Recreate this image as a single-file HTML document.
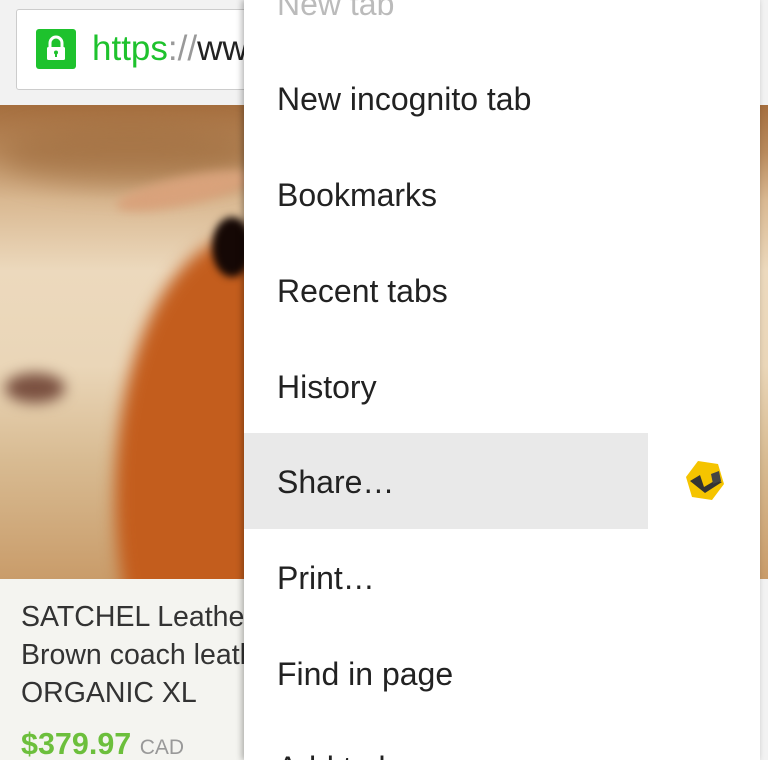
<html style="height:760px;overflow:hidden"><head><style>
body{margin:0;width:768px;height:760px;overflow:hidden;position:relative;background:#f2f2f2;font-family:"Liberation Sans",sans-serif}
.img{position:absolute;left:0;top:105px;width:768px;height:474px;overflow:hidden;background:linear-gradient(180deg,#a56e3e 0%,#b98a5c 10%,#d9b891 20%,#ecd9bd 35%,#ead6b8 55%,#d8bb92 75%,#c99c6a 100%)}
.blob{position:absolute;border-radius:50%}
.bar{position:absolute;left:16px;top:9px;width:300px;height:79px;background:#fff;border:1px solid #ccc;border-radius:3px}
.lock{position:absolute;left:36px;top:29px;width:40px;height:40px;background:#1ec22d;border-radius:3px}
.url{position:absolute;left:92px;top:29px;font-size:35px;color:#1ec22d}
.card{position:absolute;left:0;top:579px;width:260px;height:181px;background:#f4f4f0}
.t{position:absolute;left:21px;font-size:28.5px;color:#333;line-height:38px;top:598px;white-space:nowrap}
.price{position:absolute;left:21px;top:727px;font-size:30.5px;font-weight:bold;color:#6cbf3c}
.menu{position:absolute;left:244px;top:0;width:516px;height:760px;background:#fff;box-shadow:-2px 0 6px rgba(0,0,0,.3)}
.it{position:absolute;left:33px;font-size:32px;color:#222;white-space:nowrap}
.hl{position:absolute;left:0;top:433px;width:404px;height:96px;background:#e9e9e9}
</style></head><body>
<div class="img">
<div class="blob" style="left:0;top:20px;width:260px;height:60px;background:#9c6a3c;filter:blur(14px);opacity:.6"></div>
<div class="blob" style="left:115px;top:130px;width:260px;height:520px;background:#c35d1d;filter:blur(8px)"></div>
<div class="blob" style="left:115px;top:72px;width:140px;height:28px;background:#d9a27b;filter:blur(5px);transform:rotate(-12deg)"></div>
<div class="blob" style="left:212px;top:112px;width:40px;height:60px;background:#150805;filter:blur(4px)"></div>
<div class="blob" style="left:5px;top:268px;width:60px;height:30px;background:#7a5040;filter:blur(7px)"></div>
</div>
<div class="bar"></div>
<div class="lock"><svg width="40" height="40"><rect x="11" y="18" width="18" height="13" rx="1.5" fill="#fff"/><path d="M14 18v-4a6 6 0 0 1 12 0v4" stroke="#fff" stroke-width="3" fill="none"/><circle cx="20" cy="23.5" r="2" fill="#1ec22d"/><rect x="19" y="24" width="2" height="4" fill="#1ec22d"/></svg></div>
<div class="url">https<span style="color:#999">://</span><span style="color:#222">www</span></div>
<div class="card"></div>
<div class="t">SATCHEL Leather<br>Brown coach leather<br>ORGANIC XL</div>
<div class="price">$379.97 <span style="font-size:21px;font-weight:normal;color:#999">CAD</span></div>
<div class="menu">
<div class="hl"></div>
<div class="it" style="top:-14px;color:#bbb">New tab</div>
<div class="it" style="top:81px">New incognito tab</div>
<div class="it" style="top:177px">Bookmarks</div>
<div class="it" style="top:273px">Recent tabs</div>
<div class="it" style="top:369px">History</div>
<div class="it" style="top:464px">Share…</div>
<div class="it" style="top:560px">Print…</div>
<div class="it" style="top:656px">Find in page</div>
<div class="it" style="top:750px">Add to home screen</div>
<svg style="position:absolute;left:440px;top:460px" width="42" height="42"><polygon points="14,1 34,4 40,24 28,40 8,37 2,17" fill="#f5c400"/><path d="M6 21l10-6 4 12 12-7 6 2-17 11z" fill="#333"/><path d="M27 14l8-3 2 10-8 3z" fill="#444"/></svg>
</div>
</body></html>
